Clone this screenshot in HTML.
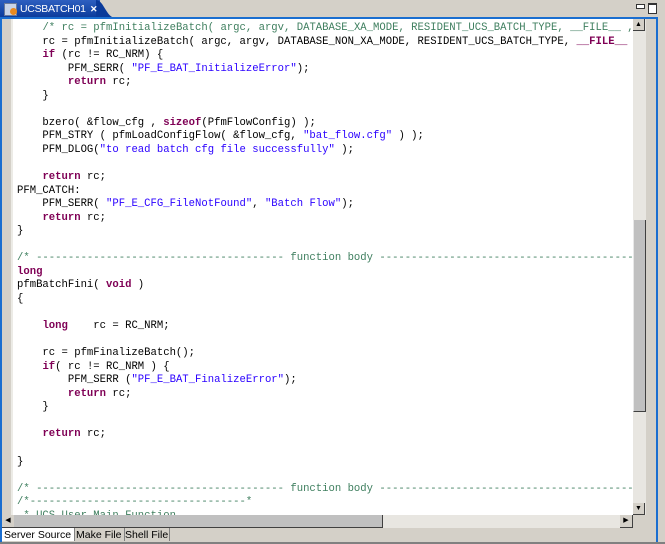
<!DOCTYPE html>
<html><head><style>
*{margin:0;padding:0}
body{width:665px;height:544px;overflow:hidden;background:#d4d0c8;position:relative;font-family:"Liberation Sans",sans-serif}
.abs{position:absolute}
pre{position:absolute;left:17px;top:20px;font-family:"Liberation Mono",monospace;font-size:10.6px;line-height:13.54px;color:#000;white-space:pre}
.c{color:#3f7f5f}.k{color:#7f0055;font-weight:bold}.s{color:#2a00ff}
</style></head><body>
<!-- tab bar -->
<div class="abs" style="left:0;top:0;width:665px;height:18px;background:#d4d0c8"></div>
<div class="abs" style="left:0;top:0;width:100px;height:18px;background:linear-gradient(#2d5fc0,#0a3a9a)"></div>
<svg class="abs" style="left:96px;top:0" width="20" height="18"><path d="M0 0 C8 0 10 18 20 18 L0 18Z" fill="#0a3a9a"/></svg>
<div class="abs" style="left:4px;top:3px;width:11px;height:11px;background:#c8d4e8;border:1px solid #6a7a9a"></div>
<div class="abs" style="left:10px;top:8px;width:7px;height:7px;background:#e88a20;border-radius:50%"></div>
<div class="abs" style="left:20px;top:1px;color:#fff;font-size:10.5px;line-height:16px;letter-spacing:-0.3px">UCSBATCH01</div>
<div class="abs" style="left:90px;top:1px;color:#fff;font-size:9px;font-weight:bold;line-height:16px">✕</div>
<div class="abs" style="left:636px;top:4px;width:7px;height:3px;border:1px solid #333;background:#fff"></div>
<div class="abs" style="left:648px;top:3px;width:7px;height:8px;border:1px solid #333;border-top-width:2px;background:#fff"></div>
<!-- frame -->
<div class="abs" style="left:0;top:17px;width:657px;height:2px;background:#1a6ed0"></div>
<div class="abs" style="left:0;top:17px;width:2px;height:525px;background:#1a6ed0"></div>
<div class="abs" style="left:656px;top:17px;width:2px;height:525px;background:#1a6ed0"></div>
<!-- editor -->
<div class="abs" style="left:2px;top:19px;width:631px;height:496px;background:#fff;overflow:hidden">
<div class="abs" style="left:0;top:0;width:9px;height:496px;background:#d4d0c8"></div>
<div class="abs" style="left:9px;top:0;width:2px;height:496px;background:#ecebe6"></div>
</div>
<div class="abs" style="left:2px;top:19px;width:631px;height:496px;overflow:hidden">
<pre style="left:15px;top:3px">    <span class="c">/* rc = pfmInitializeBatch( argc, argv, DATABASE_XA_MODE, RESIDENT_UCS_BATCH_TYPE, __FILE__ , __LINE__ );*/</span>
    rc = pfmInitializeBatch( argc, argv, DATABASE_NON_XA_MODE, RESIDENT_UCS_BATCH_TYPE, <span class="k">__FILE__</span> , __LINE__ );
    <span class="k">if</span> (rc != RC_NRM) {
        PFM_SERR( <span class="s">"PF_E_BAT_InitializeError"</span>);
        <span class="k">return</span> rc;
    }

    bzero( &amp;flow_cfg , <span class="k">sizeof</span>(PfmFlowConfig) );
    PFM_STRY ( pfmLoadConfigFlow( &amp;flow_cfg, <span class="s">"bat_flow.cfg"</span> ) );
    PFM_DLOG(<span class="s">"to read batch cfg file successfully"</span> );

    <span class="k">return</span> rc;
PFM_CATCH:
    PFM_SERR( <span class="s">"PF_E_CFG_FileNotFound"</span>, <span class="s">"Batch Flow"</span>);
    <span class="k">return</span> rc;
}

<span class="c">/* --------------------------------------- function body ----------------------------------------------------------</span>
<span class="k">long</span>
pfmBatchFini( <span class="k">void</span> )
{

    <span class="k">long</span>    rc = RC_NRM;

    rc = pfmFinalizeBatch();
    <span class="k">if</span>( rc != RC_NRM ) {
        PFM_SERR (<span class="s">"PF_E_BAT_FinalizeError"</span>);
        <span class="k">return</span> rc;
    }

    <span class="k">return</span> rc;

}

<span class="c">/* --------------------------------------- function body ----------------------------------------------------------</span>
<span class="c">/*----------------------------------*</span>
<span class="c"> * UCS User Main Function</span></pre>
</div>
<!-- vertical scrollbar -->
<div class="abs" style="left:633px;top:19px;width:13px;height:496px;background:#e8e6e1"></div>
<div class="abs" style="left:633px;top:19px;width:11px;height:11px;background:#d4d0c8;border-right:1px solid #404040;border-bottom:1px solid #404040;font-size:7px;text-align:center;line-height:11px">▲</div>
<div class="abs" style="left:633px;top:220px;width:11px;height:191px;background:#c0c0c0;border-left:1px solid #e8e8e8;border-right:1px solid #404040;border-bottom:1px solid #404040"></div>
<div class="abs" style="left:633px;top:503px;width:11px;height:11px;background:#d4d0c8;border-right:1px solid #404040;border-bottom:1px solid #404040;font-size:7px;text-align:center;line-height:11px">▼</div>
<!-- horizontal scrollbar -->
<div class="abs" style="left:2px;top:515px;width:631px;height:13px;background:#e8e6e1"></div>
<div class="abs" style="left:2px;top:515px;width:12px;height:12px;background:#d4d0c8;border-bottom:1px solid #404040;font-size:7px;text-align:center;line-height:12px">◀</div>
<div class="abs" style="left:14px;top:515px;width:368px;height:12px;background:#c0c0c0;border-right:1px solid #404040;border-bottom:1px solid #404040"></div>
<div class="abs" style="left:620px;top:515px;width:12px;height:12px;background:#d4d0c8;border-right:1px solid #404040;border-bottom:1px solid #404040;font-size:7px;text-align:center;line-height:12px">▶</div>
<!-- bottom tabs -->
<div class="abs" style="left:2px;top:528px;width:654px;height:14px;background:#d4d0c8"></div>
<div class="abs" style="left:2px;top:528px;width:70px;height:13px;background:#fff;font-size:10.5px;line-height:14px;padding-left:2px;border-right:1px solid #808080">Server Source</div>
<div class="abs" style="left:74px;top:528px;width:48px;height:13px;font-size:10.5px;line-height:14px;padding-left:2px;border-right:1px solid #808080">Make File</div>
<div class="abs" style="left:123px;top:528px;width:44px;height:13px;font-size:10.5px;line-height:14px;padding-left:2px;border-right:1px solid #808080">Shell File</div>
<div class="abs" style="left:0;top:542px;width:665px;height:2px;background:#808080"></div>
</body></html>
